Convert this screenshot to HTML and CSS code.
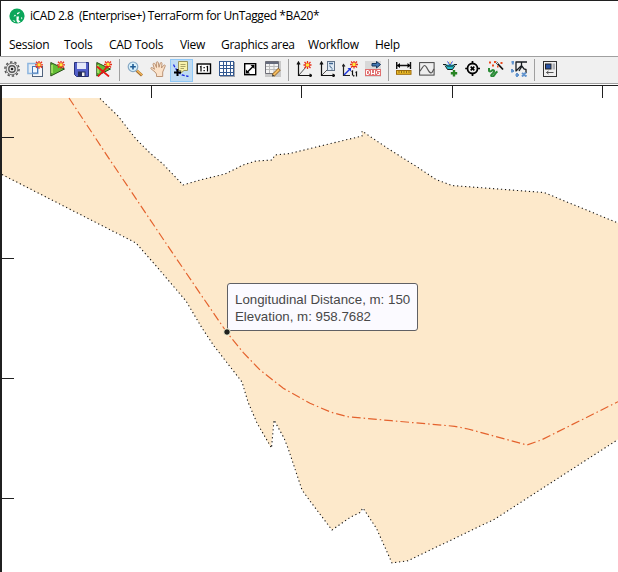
FILE: index.html
```html
<!DOCTYPE html>
<html lang="en">
<head>
<meta charset="utf-8">
<title>iCAD 2.8</title>
<link rel="stylesheet" href="styles.css">
</head>
<body>
<svg class="defs" width="0" height="0">
  <defs>
    <g id="burst">
      <path d="M0-4V4M-4 0H4M-3-3L3 3M-3 3L3-3" stroke="#e8301c" stroke-width="1.300"/>
      <rect x="-1.500" y="-1.500" width="3" height="3" fill="#ffe83c"/>
    </g>
    <g id="play">
      <path d="M.8 1.500L14.500 8 .8 15z" fill="#62bd35" stroke="#294f18"/>
      <path d="M2 4V12" stroke="#b3eb72" stroke-width="1.500"/>
    </g>
    <g id="axes">
      <path d="M2.500 1V14.500H16M1 3.500L2.500 1 4 3.500M13.500 13L16 14.500 13.500 16" fill="none" stroke="#111" stroke-width="1.200"/>
    </g>
  </defs>
</svg>
<div class="window">
  <header class="titlebar">
    <svg class="logo" viewBox="0 0 16 16"><circle cx="8" cy="8" r="7.600" fill="#0ba65a"/><path d="M8 5L11 3.800 10 5.500 8 6.500zM4.500 8.500L6 6.500 7 8zM7.500 8.500H10L9.500 12 11.500 13.500 9 15 7.500 13zM3.500 12L6.500 13 5.500 14zM12 9l1.500 1-1 1.500z" fill="#fff"/></svg>
    <h1 class="title">iCAD 2.8&nbsp; (Enterprise+) TerraForm for UnTagged *BA20*</h1>
  </header>
  <nav class="menu">
    <span class="m-session">Session</span><span class="m-tools">Tools</span><span class="m-cad">CAD Tools</span><span class="m-view">View</span><span class="m-graphics">Graphics area</span><span class="m-workflow">Workflow</span><span class="m-help">Help</span>
  </nav>
  <div class="toolbar">
    <div class="group">
      <button><svg viewBox="0 0 16 16"><circle cx="8" cy="8" r="7.100" fill="none" stroke="#555" stroke-width="1.500" stroke-dasharray="2.400 2.060"/><circle cx="8" cy="8" r="5.800" fill="#e4e4e4" stroke="#777"/><circle cx="8" cy="8" r="3.200" fill="#eee" stroke="#555" stroke-width="1.400"/><circle cx="8" cy="8" r="1.300" fill="#222"/></svg></button>
      <button><svg viewBox="0 0 16 16"><rect x="5.500" y="5.500" width="10" height="10" fill="#f6f8fb" stroke="#50627c"/><rect x=".9" y="2.500" width="10" height="10" fill="#d9e9f9" fill-opacity=".5" stroke="#8db6e0" stroke-width="1.500"/><rect x="5.500" y="5.500" width="5" height="6.500" fill="#f2f8ff" stroke="#4677b4"/><use href="#burst" x="12" y="3.800"/></svg></button>
      <button><svg viewBox="0 0 16 16"><use href="#play"/><use href="#burst" x="11" y="3.800"/></svg></button>
      <button><svg viewBox="0 0 16 16"><path d="M1.500 1.500H15.500V15.500H3.500L1.500 13.500z" fill="#5360c9" stroke="#27317c"/><path d="M4 1.500H13V8H4z" fill="#e5e9fa"/><path d="M5 10.500H12.500V15.500H5z" fill="#252c59"/><path d="M9 11.500H11.500V15H9z" fill="#f2f2f2"/></svg></button>
      <button><svg viewBox="0 0 16 16"><use href="#play"/><use href="#burst" x="12" y="3.500"/><path d="M1 5.500L13 15.500M12 5L2 15.500" stroke="#e81515" stroke-width="1.700"/></svg></button>
    </div>
    <i class="sep"></i>
    <div class="group">
      <button><svg viewBox="0 0 16 16"><path d="M9.500 9.500L15 14.500" stroke="#a36c2c" stroke-width="3"/><path d="M10 9.500L15 14" stroke="#f2b65b" stroke-width="1.500"/><circle cx="6" cy="5.800" r="4.800" fill="#d8f0fb" stroke="#86a8c4" stroke-width="1.200"/><path d="M6 3V8.600M3.200 5.800H8.800" stroke="#1f5b94" stroke-width="1.600"/></svg></button>
      <button><svg viewBox="0 0 16 16"><path d="M5 11L1 7.800C.2 6.800 1.500 6 2.500 6.800L4.500 8.300 3 3.200C3 2 4.500 2 5 3L6.500 6.500 6.300 1.700C6.500.4 8 .4 8.300 1.700L9 6.300 10.300 2C10.800 1 12.300 1.400 12 2.700L11.500 7 13.700 4.300C14.500 3.500 15.700 4.300 15.200 5.200L12.700 11V15.500H6.500V13z" fill="#fbe2c9" stroke="#b58b6b" stroke-width=".9"/></svg></button>
      <button class="active"><svg viewBox="0 0 16 16"><path d="M.5 3.500L2 6.500 5 11 9 14 15.500 15.500" fill="none" stroke="#1d29e0" stroke-width="1.300" stroke-dasharray="3 1.500"/><path d="M5.500.5H14.500V9.500H11L8 12 8 9.500H5.500z" fill="#f9f2aa" stroke="#97935b"/><path d="M7.500 3.500H12.500M7.500 5.500H12.500M7.500 7.500H11" stroke="#aaa466"/><path d="M4.500 8V15M1 11.500H8" stroke="#000" stroke-width="2"/></svg></button>
      <button><svg viewBox="0 0 16 16"><rect x="1.200" y="3" width="13.300" height="9.500" fill="#fff" stroke="#000" stroke-width="1.400"/><path d="M4 6L5 5.500V10.500M10.500 6L11.500 5.500V10.500" fill="none" stroke="#000" stroke-width="1.200"/><path d="M7.500 6H8.800V7.300H7.500zM7.500 9H8.800V10.300H7.500z"/></svg></button>
      <button><svg class="crisp" viewBox="0 0 16 16"><rect x="1" y="1" width="15" height="15" fill="#a0a4ac"/><rect width="15" height="15" fill="#fff"/><path d="M.5 0V15M4.500 0V15M7.500 0V15M11.500 0V15M14.500 0V15M0 .5H15M0 4.500H15M0 7.500H15M0 11.500H15M0 14.500H15" stroke="#345991"/></svg></button>
      <button><svg viewBox="0 0 16 16"><rect x="2.700" y="2.700" width="11" height="11" fill="#fff" stroke="#000" stroke-width="1.400"/><path d="M5 11.500L11.500 5" stroke="#000" stroke-width="1.500"/><path d="M8.500 4H12.500V8zM4 8.500V12.500H8z"/></svg></button>
      <button><svg viewBox="0 0 16 16"><rect width="16" height="16" fill="#c9c9c9"/><path d="M.5.500H13.500V9.500L10.500 12.500H.5z" fill="#f4f4f4" stroke="#6f6f78"/><path d="M1 2H13" stroke="#666b7c" stroke-width="2"/><path d="M1 5.500H13M1 8.500H13M4.500 3V12M9 3V12" stroke="#bbb"/><path d="M8 14.500L14.500 8" stroke="#90662b" stroke-width="3.600"/><path d="M8 14.500L14 8.500" stroke="#f5bd62" stroke-width="2"/><path d="M7 15.500L7.500 13 9.500 15z" fill="#333"/></svg></button>
    </div>
    <i class="sep"></i>
    <div class="group">
      <button><svg viewBox="0 0 16 16"><use href="#axes"/><path d="M3 14L10 6" stroke="#555"/><use href="#burst" x="11.500" y="4"/></svg></button>
      <button><svg viewBox="0 0 16 16"><use href="#axes"/><path d="M3 14L8 9" stroke="#555"/><rect x="8.500" y=".5" width="7" height="9" fill="#dfeaf5" stroke="#627388"/><path d="M10 2.500H14" stroke="#40658f" stroke-width="1.500"/><path d="M10 5H11.500V6.500H13M12 8H14" fill="none" stroke="#718eaa"/></svg></button>
      <button><svg viewBox="0 0 16 16"><path d="M1.500 3.500V14.500H8M.3 5.500L1.500 3.500 3 5.500" fill="none" stroke="#222" stroke-width="1.200"/><path d="M2 14L8 8" stroke="#1c34dc" stroke-width="1.400"/><path d="M5.500 7H9V10.500z" fill="#1c34dc"/><use href="#burst" x="12" y="3.500"/><path d="M9.500 10.500L10.500 10V14.500M12 14L11.500 15.500M13.500 11.500L14.500 11V15.500" fill="none" stroke="#111" stroke-width="1.200"/></svg></button>
      <button><svg viewBox="0 0 16 16"><rect width="16" height="16" fill="#d8d8d8"/><path d="M7 2.500H11.500V.5L15.500 3.500 11.500 7V5H7z" fill="#4379b4" stroke="#17375e"/><rect y="8" width="16" height="7" fill="#e07070"/><path d="M1.500 9.500V13.500H3L4.500 12.500V10.500L3 9.500zM6.500 9V13.500L8 12 9.500 13.500V9M15 9.500H12.500L11.500 10.500V12.500L12.500 13.500H14.500V11.500H13.500" fill="none" stroke="#fff"/></svg></button>
    </div>
    <i class="sep"></i>
    <div class="group">
      <button><svg viewBox="0 0 16 16"><path d="M.7 1V8M14.500 1V8M1 4.500H14" stroke="#111" stroke-width="1.400"/><path d="M4 2V7L1 4.500zM11.500 2V7L14.500 4.500z"/><rect x=".5" y="9.500" width="14.500" height="3.800" fill="#edbc27" stroke="#9c6b0c"/><path d="M3 10V12M5.500 10V12M8 10V12M10.500 10V12M13 10V12" stroke="#654a12" stroke-width=".7"/></svg></button>
      <button><svg viewBox="0 0 16 16"><rect x=".6" y="1.600" width="14.500" height="12.500" fill="#eee" stroke="#444"/><path d="M1 10C3 8 4 4.500 5.500 4.500C8 4.500 9 11.500 12 12C13.500 12 14 9 15 8" fill="none" stroke="#555" stroke-width="1.200"/></svg></button>
      <button><svg viewBox="0 0 16 16"><path d="M1 3.500H4L5 5H11L12 3.500H15M3 4.500L5.500 8.500H10.500L13 4.500" fill="#27bdcc" stroke="#152020"/><path d="M5.500.5L8 4 10.500.5" fill="none" stroke="#2f3be0"/><path d="M8 .5V3" stroke="#eed528"/><path d="M12 9V15.500M8.800 12.200H15.200" stroke="#288524" stroke-width="2.400"/></svg></button>
      <button><svg viewBox="0 0 16 16"><circle cx="7.500" cy="7.500" r="5" fill="#eee" stroke="#000" stroke-width="1.800"/><path d="M7.500 0V3M7.500 12V15M.2 7.500H3M12 7.500H15M5.700 5.700L9.300 9.300M9.300 5.700L5.700 9.300" stroke="#000" stroke-width="1.700"/></svg></button>
      <button><svg viewBox="0 0 16 16"><path d="M1 7V9.500C1 11 3 10.500 4 9.500S7 9.500 5.500 11.500 2 14.500 4 15.500 7 11.500 9.500 10.500" fill="none" stroke="#298b36" stroke-width="2"/><path d="M8 1L15 8.500" stroke="#111" stroke-width="1.800"/><path d="M8 1L10 3" stroke="#ddd"/><path d="M1 1.500H3M4 4.500H6M6 1H8M12.500 2H14.500M9 5.500H10.500" stroke="#e94a20" stroke-width="2"/></svg></button>
      <button><svg viewBox="0 0 16 16"><path d="M4.500 1H16M5 1V10.500M10.500 1V6M5 10L10.500 4.500 13 8 15 8.500V12M10.500 6L8 10" fill="none" stroke="#171b20" stroke-width="1.300"/><path d="M.5 1H3M1.800 0V3.500M1 8V11.500M0 10H3M6 12V16M4.500 14H8M11 12L15.500 15.500M15 11.500L11 15.500" stroke="#6294ce" stroke-width="2"/></svg></button>
    </div>
    <i class="sep"></i>
    <div class="group">
      <button><svg viewBox="0 0 16 16"><rect x="1.500" y=".5" width="13" height="15" fill="#f0f0f0" stroke="#333"/><rect x="3.500" y="3" width="5.500" height="5" fill="#2853a4" stroke="#222"/><rect x="10.500" y="2.500" width="2.500" height="6" fill="#aeb0b5"/><path d="M4.500 11.500H11.500M6.500 10L4.500 11.500 6.500 13" fill="none" stroke="#555"/></svg></button>
    </div>
  </div>
  <main class="canvas">
    <svg class="plan" viewBox="2 86 616 486">
      <path class="land" d="M2 98H100L118 116 136 139 150 153 163 164 183 185 200 180 225 174 243 165 256 161 272 160 275 155 290 153.500 308 149 362 136V131L388 148.500 418 167.500 436 179.500 452 185.500 544 192.500 618 223V439.500L495 519 408 560.700 392 563 376.500 528.500 363 508 360 512.500 350 517.500 332 530 310 501 302 490 288 448 284 438 274 420 271 448 257 423 248 402 242 382 214 346 202 328 186 301 180 294 157 267 136 243 2 175z"/>
      <path class="edge" d="M100 98.500L118 116 136 139 150 153 163 164 183 185 200 180 225 174 243 165 256 161 272 160 275 155 290 153.500 308 149 362 136V131L388 148.500 418 167.500 436 179.500 452 185.500 544 192.500 618 223"/>
      <path class="edge" d="M2 174.500L136 243 157 267 180 294 186 301 202 328 214 346 242 382 248 402 257 423 271.500 448 274 420 284 438 288 448 302 490 310 501 332 530 350 517.500 360 512.500 363 508 376.500 528.500 392 563 408 560.700 495 519 618 439.500"/>
      <path class="center" d="M69 98L110 160 168.300 246.700 200 293.300 226.500 332 243.300 352.700 260 370 283.300 388.300 310 403.300 331.300 412.300 348 416.700 391.300 420.700 454.700 426.300 468 429 527 445 541.300 440 618 401.700"/>
      <path class="ticks" d="M151.500 86V98M301.500 86V98M452.500 86V98M602.500 86V98M2 137.500H13.500M2 258.500H13.500M2 378.500H13.500M2 498.500H13.500"/>
    </svg>
    <div class="tooltip"><span class="t1">Longitudinal Distance, m: 150</span><span class="t2">Elevation, m: 958.7682</span></div>
    <svg class="dot" viewBox="0 0 8 8"><circle cx="4" cy="4" r="3.300" fill="#20221f" stroke="#fffbdc"/></svg>
  </main>
</div>
</body>
</html>
```
FILE: styles.css
```css
* { box-sizing: border-box; }
body { margin: 0; width: 618px; height: 572px; overflow: hidden; background: #fff; font-family: "Open Sans", sans-serif; font-size: 12px; color: #000; }
.defs { position: absolute; }
.window { height: 572px; border-top: 1px solid #202020; display: flex; flex-direction: column; }
.titlebar { height: 31px; padding: 0 0 2px 8px; border-left: 1px solid #202020; display: flex; align-items: center; flex: none; }
.logo { width: 16px; height: 16px; margin-right: 5px; }
.title { margin: 0; font-size: 12px; font-weight: 400; white-space: nowrap; letter-spacing: -0.42px; }
.menu { height: 24px; flex: none; display: flex; align-items: center; padding-left: 8px; border-left: 1px solid #202020; white-space: nowrap; letter-spacing: -0.3px; }
.m-session { width: 55px; }
.m-tools { width: 45px; }
.m-cad { width: 71px; }
.m-view { width: 41px; }
.m-graphics { width: 87px; }
.m-workflow { width: 67px; }
.toolbar { height: 28px; flex: none; display: flex; align-items: center; background: #f0f0f0; border-top: 1px solid #a0a0a0; border-bottom: 1px solid #a0a0a0; }
.group { display: flex; }
.group:first-child { padding-left: 1px; }
button { width: 23px; height: 23px; padding: 2px 4px 4px 3px; margin: 0; border: 0; background: transparent; display: flex; align-items: center; justify-content: center; }
button svg { width: 16px; height: 16px; flex: none; }
.crisp { shape-rendering: crispEdges; }
.active { background: #c0dcf3; border: 1px solid #90c8f6; padding: 1px 3px 3px 2px; }
.sep { width: 8px; height: 22px; flex: none; background: linear-gradient(#a0a0a0, #a0a0a0) 3px 0 / 1px 22px no-repeat; }
.canvas { position: relative; flex: 1; margin-top: 1px; border-top: 1px solid #202020; border-left: 2px solid #202020; min-height: 0; }
.plan { display: block; width: 616px; height: 486px; }
.land { fill: #fde9cb; }
.edge { fill: none; stroke: #151515; stroke-width: 1.1; stroke-dasharray: 1.2 2.8; }
.center { fill: none; stroke: #e4622d; stroke-width: 1.2; stroke-dasharray: 8.700 3 1.500 3; }
.ticks { fill: none; stroke: #202020; stroke-width: 1; shape-rendering: crispEdges; }
.tooltip { position: absolute; left: 225px; top: 197px; width: 191px; height: 48px; padding: 7px 0 0 7px; display: flex; flex-direction: column; background: #fbfaff; border: 1px solid #606064; border-radius: 3px; font: 13.300px/17px "Liberation Sans", sans-serif; color: #484848; white-space: nowrap; }
.dot { position: absolute; left: 221px; top: 242px; width: 8px; height: 8px; }
```
